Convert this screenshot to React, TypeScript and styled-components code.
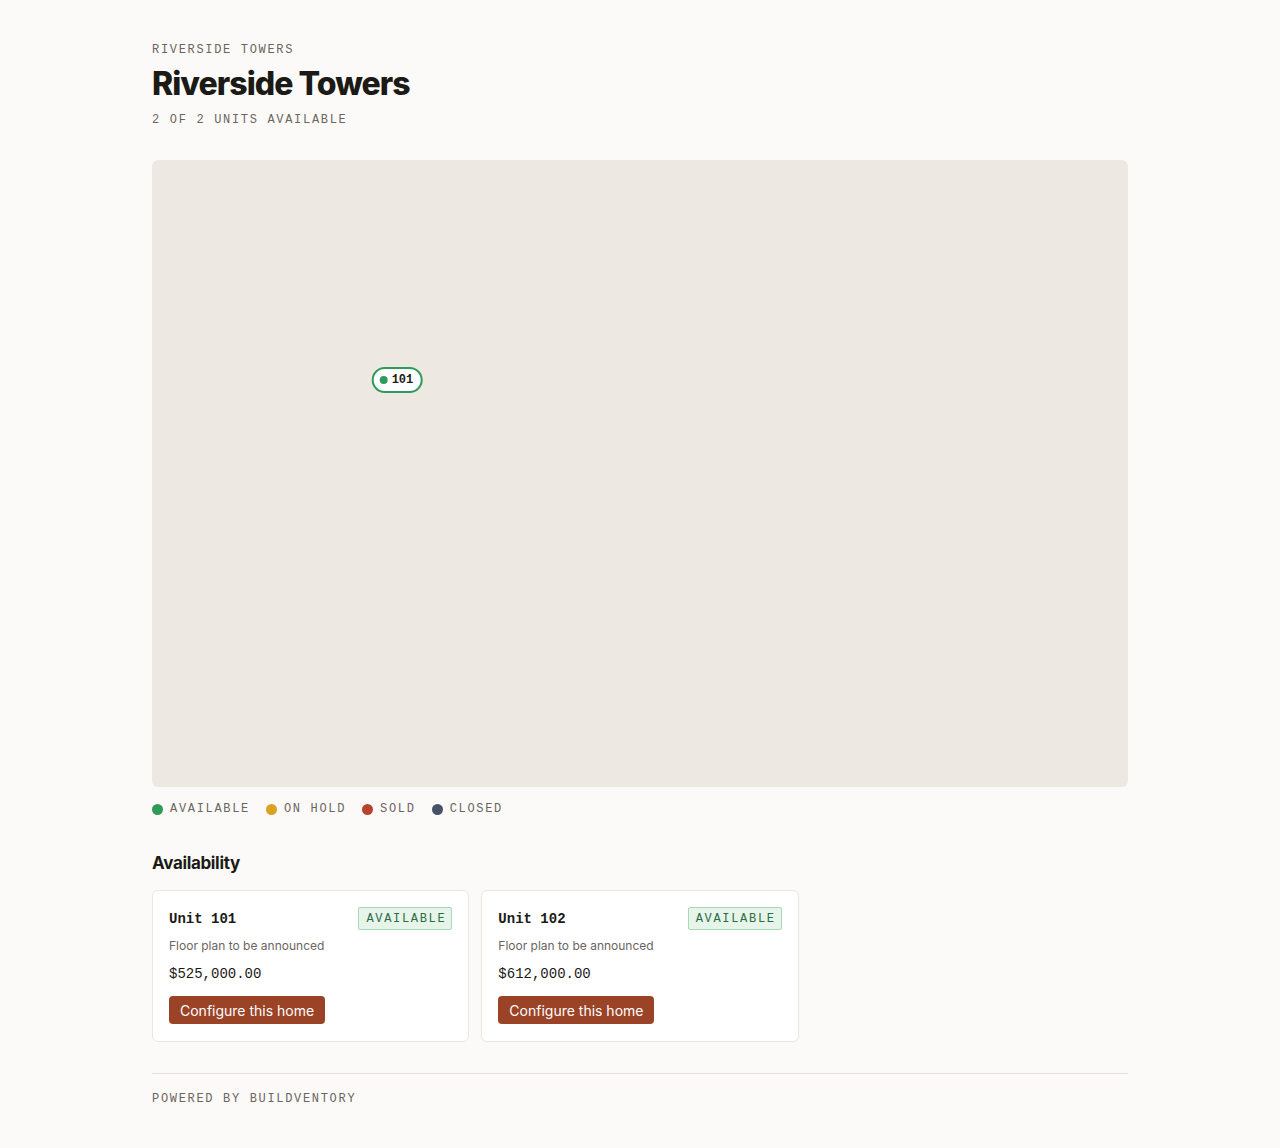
import React from 'react';
import styled, { createGlobalStyle } from 'styled-components';

type Status = 'available' | 'hold' | 'sold' | 'closed';

const statusColors: Record<Status, string> = {
    available: '#2f9a5a',
    hold: '#d9a21f',
    sold: '#b5432d',
    closed: '#46526a',
};

const legend: { status: Status; label: string }[] = [
    { status: 'available', label: 'Available' },
    { status: 'hold', label: 'On hold' },
    { status: 'sold', label: 'Sold' },
    { status: 'closed', label: 'Closed' },
];

const units = [
    { id: '101', price: '$525,000.00', x: 25.1, y: 35.1 },
    { id: '102', price: '$612,000.00' },
];

const mono = `"Liberation Mono", "DejaVu Sans Mono", monospace`;

const GlobalStyle = createGlobalStyle`
    body {
        margin: 0;
        background: #fbfaf8;
        color: #1c1a17;
        font-family: Inter, "Noto Sans", sans-serif;
    }
`

const Page = styled.main`
    max-width: 976px;
    margin: 0 auto;
    padding: 42px 0 40px;
`
const Mono = styled.div`
    font-family: ${mono};
    font-size: 12px;
    line-height: 16px;
    letter-spacing: 0.14em;
    text-transform: uppercase;
    color: #6b655e;
`
const Title = styled.h1`
    margin: 8px 0 10px;
    font-size: 32px;
    line-height: 36px;
    font-weight: 800;
    letter-spacing: -0.03em;
    color: #1c1a17;
`
const MapArea = styled.div`
    position: relative;
    margin-top: 32px;
    aspect-ratio: 14 / 9;
    background: #ede8e1;
    border-radius: 6px;
`
const Pin = styled.button<{ $color: string }>`
    position: absolute;
    transform: translate(-50%, -50%);
    display: flex;
    align-items: center;
    gap: 4px;
    height: 26px;
    padding: 0 7px 0 6px;
    background: #fff;
    border: 2px solid ${p => p.$color};
    border-radius: 13px;
    font-family: ${mono};
    font-size: 12px;
    font-weight: 700;
    color: #1c1a17;
    cursor: pointer;
`
const Dot = styled.span<{ $color: string; $size?: number }>`
    display: inline-block;
    width: ${p => p.$size ?? 11}px;
    height: ${p => p.$size ?? 11}px;
    border-radius: 50%;
    background: ${p => p.$color};
    flex-shrink: 0;
`
const Legend = styled.div`
    display: flex;
    gap: 16px;
    margin-top: 14px;
`
const LegendItem = styled(Mono)`
    display: flex;
    align-items: center;
    gap: 7px;
`
const SectionTitle = styled.h2`
    margin: 35px 0 16px;
    font-size: 17px;
    line-height: 22px;
    font-weight: 700;
    letter-spacing: -0.02em;
`
const Grid = styled.div`
    display: grid;
    grid-template-columns: repeat(3, 1fr);
    gap: 12px;
`
const UnitCard = styled.div`
    background: #fff;
    border: 1px solid #ebe6e0;
    border-radius: 6px;
    padding: 16px 16px 17px;
`
const CardHead = styled.div`
    display: flex;
    justify-content: space-between;
    align-items: center;
`
const UnitName = styled.div`
    font-family: ${mono};
    font-size: 14px;
    font-weight: 700;
`
const Badge = styled(Mono)`
    padding: 3px 5px 2px 7px;
    background: #e7f4ea;
    border: 1px solid #a9d8b7;
    border-radius: 2px;
    color: #2a6c43;
`
const Note = styled.div`
    margin-top: 8px;
    font-size: 12px;
    line-height: 16px;
    color: #6b655e;
`
const Price = styled.div`
    margin-top: 11px;
    font-family: ${mono};
    font-size: 14px;
    line-height: 18px;
`
const ConfigureButton = styled.button`
    margin-top: 13px;
    height: 28px;
    padding: 0 11px;
    border: none;
    border-radius: 4px;
    background: #9b4326;
    color: #fff;
    font-family: Inter, sans-serif;
    font-size: 14px;
    cursor: pointer;
`
const Footer = styled(Mono)`
    margin-top: 31px;
    padding-top: 17px;
    border-top: 1px solid #e6e1da;
`

export default function App() {
    const available = units.length;
    return (
        <Page>
            <GlobalStyle />
            <Mono>Riverside Towers</Mono>
            <Title>Riverside Towers</Title>
            <Mono>{available} of {units.length} units available</Mono>

            <MapArea>
                {units.filter(u => u.x !== undefined).map(u => (
                    <Pin key={u.id} $color={statusColors.available} style={{ left: `${u.x}%`, top: `${u.y}%` }}>
                        <Dot $color={statusColors.available} $size={8} />
                        {u.id}
                    </Pin>
                ))}
            </MapArea>

            <Legend>
                {legend.map(l => (
                    <LegendItem key={l.status}>
                        <Dot $color={statusColors[l.status]} />
                        {l.label}
                    </LegendItem>
                ))}
            </Legend>

            <SectionTitle>Availability</SectionTitle>
            <Grid>
                {units.map(u => (
                    <UnitCard key={u.id}>
                        <CardHead>
                            <UnitName>Unit {u.id}</UnitName>
                            <Badge>Available</Badge>
                        </CardHead>
                        <Note>Floor plan to be announced</Note>
                        <Price>{u.price}</Price>
                        <ConfigureButton type="button">Configure this home</ConfigureButton>
                    </UnitCard>
                ))}
            </Grid>

            <Footer>Powered by Buildventory</Footer>
        </Page>
    );
}
